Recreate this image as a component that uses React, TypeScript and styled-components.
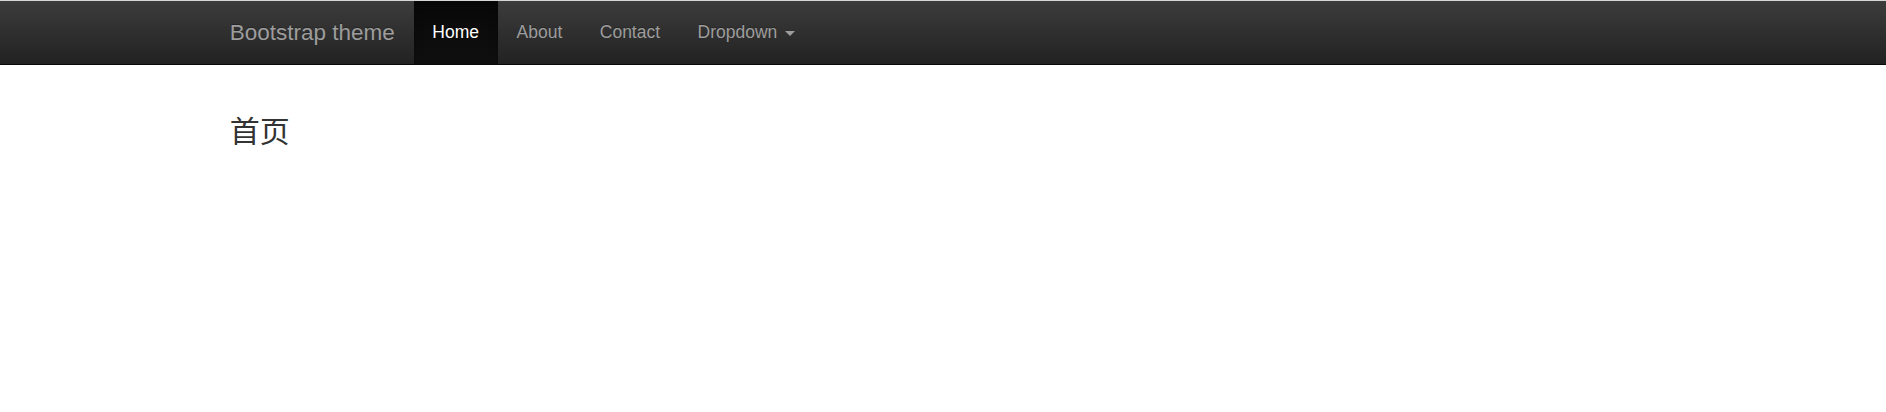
import React from "react";
import styled, { createGlobalStyle } from "styled-components";

const GlobalStyle = createGlobalStyle`
  html, body { margin: 0; padding: 0; background: #fff; }
  body {
    font-family: "Liberation Sans", Arial, "Noto Sans CJK SC", sans-serif;
    font-size: 17.5px;
    line-height: 1.428571;
    color: #333;
  }
  * { box-sizing: border-box; }
`;

const Navbar = styled.nav`
  height: 65px;
  border-top: 1px solid #d6d6d6;
  border-bottom: 1.25px solid #080808;
  background-image: linear-gradient(to bottom, #3c3c3c 0%, #222 100%);
`;

const Container = styled.div`
  width: 1464px;
  margin: 0 auto;
  padding: 0 18.75px;
`;

const NavInner = styled(Container)`
  display: flex;
  align-items: stretch;
  height: 100%;
`;

const Brand = styled.a`
  display: flex;
  align-items: center;
  margin-left: -18.75px;
  padding: 0 18.75px;
  font-size: 22.5px;
  line-height: 25px;
  color: #9d9d9d;
  text-decoration: none;
  text-shadow: 0 -1px 0 rgba(0, 0, 0, 0.25);
`;

const NavList = styled.ul`
  display: flex;
  margin: 0;
  padding: 0;
  list-style: none;
`;

const NavItem = styled.li<{ $active?: boolean }>`
  display: flex;
  background-image: ${(p) =>
    p.$active ? "linear-gradient(to bottom, #080808 0%, #0f0f0f 100%)" : "none"};
  box-shadow: ${(p) => (p.$active ? "inset 0 3px 9px rgba(0,0,0,0.25)" : "none")};
`;

const NavLink = styled.a<{ $active?: boolean }>`
  display: flex;
  align-items: center;
  padding: 0 18.75px;
  line-height: 25px;
  font-size: 17.5px;
  color: ${(p) => (p.$active ? "#fff" : "#9d9d9d")};
  text-decoration: none;
  text-shadow: 0 -1px 0 rgba(0, 0, 0, 0.25);
`;

const LinkText = styled.span`
  white-space: pre;
`;

const Caret = styled.span`
  display: inline-block;
  width: 0;
  height: 0;
  margin-left: 2.5px;
  margin-top: 2px;
  border-top: 5px solid #9d9d9d;
  border-left: 5px solid transparent;
  border-right: 5px solid transparent;
`;

const Heading = styled.h3`
  margin: 50px 0 0;
  font-family: "Liberation Sans", Arial, "Noto Sans CJK SC", sans-serif;
  font-size: 30px;
  font-weight: 400;
  line-height: 33px;
  color: #333;
`;

export default function App() {
  return (
    <>
      <GlobalStyle />
      <Navbar>
        <NavInner>
          <Brand href="#">Bootstrap theme</Brand>
          <NavList>
            <NavItem $active>
              <NavLink $active href="#">Home</NavLink>
            </NavItem>
            <NavItem>
              <NavLink href="#">About</NavLink>
            </NavItem>
            <NavItem>
              <NavLink href="#">Contact</NavLink>
            </NavItem>
            <NavItem>
              <NavLink href="#">
                <LinkText>Dropdown </LinkText>
                <Caret />
              </NavLink>
            </NavItem>
          </NavList>
        </NavInner>
      </Navbar>
      <Container>
        <Heading>首页</Heading>
      </Container>
    </>
  );
}
